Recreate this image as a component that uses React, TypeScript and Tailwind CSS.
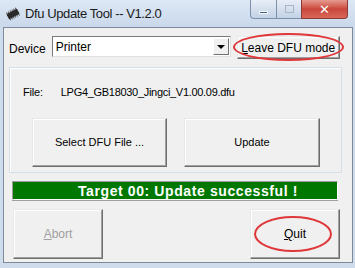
function ChipIcon() {
  return (
    <svg width="18" height="14" viewBox="0 0 18 14">
      <g transform="rotate(-28 9 7)">
        <rect x="3" y="4" width="12" height="6" rx="1" fill="#2a2a2a" />
        {[4, 6, 8, 10, 12, 14].map((x) => (
          <g key={x}>
            <rect x={x - 0.5} y="2.5" width="1" height="1.5" fill="#555" />
            <rect x={x - 0.5} y="10" width="1" height="1.5" fill="#555" />
          </g>
        ))}
      </g>
    </svg>
  );
}

function WinButton({ children, className, disabled }: { children: React.ReactNode; className: string; disabled?: boolean }) {
  return (
    <div
      className={
        'flex items-center justify-center border border-t-[#e8e8e8] border-l-[#e8e8e8] border-r-[#6e6e6e] border-b-[#6e6e6e] bg-[#f0f0f0] shadow-[inset_-1px_-1px_0_#a0a0a0,inset_1px_1px_0_#ffffff] ' +
        (disabled ? 'text-[#a0a0a0] ' : 'text-black ') +
        className
      }
    >
      {children}
    </div>
  );
}

export default function App() {
  return (
    <div className="w-[355px] h-[268px] bg-[#cfdcec] font-['Liberation_Sans',sans-serif] overflow-hidden relative">
      {/* title bar */}
      <div className="h-[27px] flex items-start relative bg-gradient-to-b from-[#dde8f5] to-[#c9d8eb]">
        <div className="flex items-center pt-[4px] pl-[4px] gap-[3px]">
          <ChipIcon />
          <span className="text-[13px] text-[#1a1a1a] tracking-[-0.4px]">Dfu Update Tool -- V1.2.0</span>
        </div>
        <div className="ml-auto mr-[7px] flex h-[19px]">
          <div className="w-[27px] rounded-bl-[4px] border border-[#7d90ab] border-t-0 bg-gradient-to-b from-[#e8eef7] to-[#c3d2e6] flex items-center justify-center">
            <div className="w-[9px] h-[3px] mt-[6px] bg-[#4c5e78] border border-[#f4f8fc]" />
          </div>
          <div className="w-[24px] border-b border-[#7d90ab] bg-gradient-to-b from-[#e8eef7] to-[#c3d2e6] flex items-center justify-center">
            <div className="w-[9px] h-[8px] border border-[#a8b6c9]" />
          </div>
          <div className="w-[47px] rounded-br-[4px] border border-[#8d3a34] border-t-0 bg-gradient-to-b from-[#e59a8f] via-[#c9463b] to-[#d8685a] flex items-center justify-center">
            <span className="text-white font-bold text-[13px] leading-none font-['DejaVu_Sans',sans-serif]">✕</span>
          </div>
        </div>
      </div>

      {/* client area */}
      <div className="absolute left-[3px] top-[27px] w-[350px] h-[236px] bg-[#f0f0f0] border border-[#7e8a97]">
        <div className="flex flex-col">
          {/* device row */}
          <div className="flex items-start mt-[8px] ml-[5px] text-[12px]">
            <span className="mt-[4px] text-black">Device</span>
            <div className="ml-[6px] w-[179px] h-[21px] border border-[#7a7a7a] border-r-[#e0e0e0] border-b-[#e0e0e0] bg-white flex items-center">
              <span className="ml-[3px] text-black">Printer</span>
              <div className="ml-auto mr-[1px] w-[16px] h-[17px] bg-[#f0f0f0] border border-t-[#ffffff] border-l-[#ffffff] border-r-[#707070] border-b-[#707070] flex items-center justify-center">
                <div className="w-0 h-0 border-l-[4px] border-r-[4px] border-t-[4px] border-l-transparent border-r-transparent border-t-black" />
              </div>
            </div>
            <div className="relative ml-[6px]">
              <WinButton className="w-[103px] h-[23px]">
                <span>
                  <span className="underline">L</span>eave DFU mode
                </span>
              </WinButton>
              <div className="absolute -left-[4px] -top-[3px] w-[111px] h-[28px] rounded-[50%] border-2 border-[#e0383a]" />
            </div>
          </div>

          {/* group box */}
          <div className="ml-[5px] mt-[8px] w-[333px] h-[106px] border border-[#d5dfe5] shadow-[inset_1px_1px_0_#ffffff] flex flex-col text-[11px]">
            <div className="flex items-center mt-[16px] ml-[13px] text-black">
              <span className="tracking-[-0.2px]">File:</span>
              <span className="ml-[18px] tracking-[-0.3px]">LPG4_GB18030_Jingci_V1.00.09.dfu</span>
            </div>
            <div className="flex mt-[17px] ml-[22px] gap-[17px]">
              <WinButton className="w-[135px] h-[49px]">Select DFU File ...</WinButton>
              <WinButton className="w-[136px] h-[49px]">Update</WinButton>
            </div>
          </div>

          {/* status bar */}
          <div className="ml-[8px] mt-[8px] w-[326px] h-[19px] border border-t-[#9a9a9a] border-l-[#9a9a9a] border-r-[#ffffff] border-b-[#ffffff] shadow-[0_1px_0_#a0a0a0]">
            <div className="w-full h-full bg-[#007800] flex items-center justify-center pl-[26px]">
              <span className="text-white font-bold text-[14px] tracking-[0.6px] leading-none">Target 00: Update successful !</span>
            </div>
          </div>

          {/* bottom buttons */}
          <div className="flex mt-[9px] ml-[9px] text-[12px]">
            <WinButton disabled className="w-[90px] h-[50px]">
              <span>
                <span className="underline">A</span>bort
              </span>
            </WinButton>
            <div className="relative ml-auto mr-[12px]">
              <WinButton className="w-[90px] h-[50px]">
                <span>
                  <span className="underline">Q</span>uit
                </span>
              </WinButton>
              <div className="absolute left-[4px] top-[7px] w-[78px] h-[36px] rounded-[50%] border-2 border-[#e0383a]" />
            </div>
          </div>
        </div>
      </div>
    </div>
  );
}
